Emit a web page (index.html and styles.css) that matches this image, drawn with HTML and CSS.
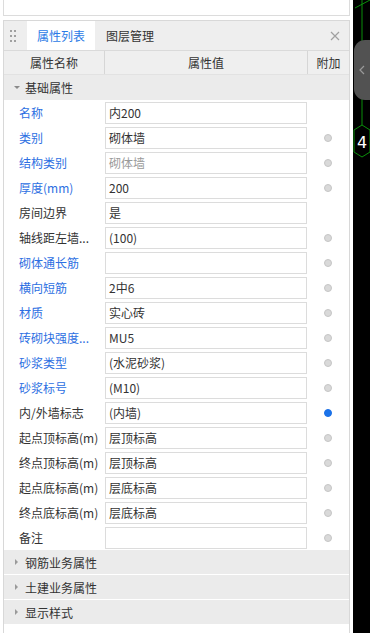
FILE: index.html
```html
<!DOCTYPE html>
<html lang="zh-CN">
<head>
    <meta charset="UTF-8">
    <meta name="viewport" content="width=device-width, initial-scale=1.0">
    <title>属性列表</title>
    <link rel="stylesheet" href="styles.css">
</head>
<body>

<div class="app">
    <div class="side">
        <div class="topbox"></div>

        <div class="panel">
            <!-- Tabs -->
            <div class="tabs">
                <span class="grip"><i></i><i></i><i></i><i></i><i></i><i></i></span>
                <span class="tab active">属性列表</span>
                <span class="tab">图层管理</span>
                <span class="close">
                    <svg width="10" height="10" viewBox="0 0 10 10"><path d="M1 1L9 9M9 1L1 9" stroke="#a0a0a0" stroke-width="1.2" fill="none"/></svg>
                </span>
            </div>

            <!-- Column header -->
            <div class="colhead">
                <div class="cell">属性名称</div>
                <div class="cell">属性值</div>
                <div class="cell">附加</div>
            </div>

            <div class="group"><span class="caret down"></span>基础属性</div>

            <div class="row"><span class="label blue">名称</span><span class="value">内200</span><span class="extra"></span></div>
            <div class="row"><span class="label blue">类别</span><span class="value">砌体墙</span><span class="extra"><i class="dot"></i></span></div>
            <div class="row"><span class="label blue">结构类别</span><span class="value muted">砌体墙</span><span class="extra"><i class="dot"></i></span></div>
            <div class="row"><span class="label blue">厚度(mm)</span><span class="value">200</span><span class="extra"><i class="dot"></i></span></div>
            <div class="row"><span class="label">房间边界</span><span class="value">是</span><span class="extra"></span></div>
            <div class="row"><span class="label">轴线距左墙...</span><span class="value">(100)</span><span class="extra"><i class="dot"></i></span></div>
            <div class="row"><span class="label blue">砌体通长筋</span><span class="value"></span><span class="extra"><i class="dot"></i></span></div>
            <div class="row"><span class="label blue">横向短筋</span><span class="value">2中6</span><span class="extra"><i class="dot"></i></span></div>
            <div class="row"><span class="label blue">材质</span><span class="value">实心砖</span><span class="extra"><i class="dot"></i></span></div>
            <div class="row"><span class="label blue">砖砌块强度...</span><span class="value">MU5</span><span class="extra"><i class="dot"></i></span></div>
            <div class="row"><span class="label blue">砂浆类型</span><span class="value">(水泥砂浆)</span><span class="extra"><i class="dot"></i></span></div>
            <div class="row"><span class="label blue">砂浆标号</span><span class="value">(M10)</span><span class="extra"><i class="dot"></i></span></div>
            <div class="row"><span class="label">内/外墙标志</span><span class="value">(内墙)</span><span class="extra"><i class="dot on"></i></span></div>
            <div class="row"><span class="label">起点顶标高(m)</span><span class="value">层顶标高</span><span class="extra"><i class="dot"></i></span></div>
            <div class="row"><span class="label">终点顶标高(m)</span><span class="value">层顶标高</span><span class="extra"><i class="dot"></i></span></div>
            <div class="row"><span class="label">起点底标高(m)</span><span class="value">层底标高</span><span class="extra"><i class="dot"></i></span></div>
            <div class="row"><span class="label">终点底标高(m)</span><span class="value">层底标高</span><span class="extra"><i class="dot"></i></span></div>
            <div class="row"><span class="label">备注</span><span class="value"></span><span class="extra"><i class="dot"></i></span></div>

            <div class="group closed"><span class="caret right"></span>钢筋业务属性</div>
            <div class="group closed"><span class="caret right"></span>土建业务属性</div>
            <div class="group closed"><span class="caret right"></span>显示样式</div>
        </div>
    </div>

    <!-- Drawing canvas edge -->
    <div class="canvas">
        <svg class="grid" width="17" height="633" viewBox="0 0 17 633">
            <path d="M9 0V125" stroke="#0b8f0b" stroke-width="1" fill="none"/>
            <path d="M2 8L17 0" stroke="#0b8f0b" stroke-width="1" fill="none"/>
            <path d="M9 125L17 130V152L9 157L1 152V130Z" stroke="#0b8f0b" stroke-width="1" fill="none"/>
            <text x="9" y="148" fill="#fff" font-family="DejaVu Sans, sans-serif" font-size="16" text-anchor="middle">4</text>
        </svg>
        <div class="fold">
            <svg width="6" height="10" viewBox="0 0 6 10"><path d="M5 1L1 5L5 9" stroke="#9a9a9a" stroke-width="1.2" fill="none"/></svg>
        </div>
    </div>
</div>

</body>
</html>
```

FILE: styles.css
```css
* {
    box-sizing: border-box;
    margin: 0;
    padding: 0;
}

body {
    background: #fff;
    font-family: "Noto Sans CJK SC", "Noto Sans", sans-serif;
    font-size: 12px;
    color: #333;
}

.app {
    display: flex;
    width: 370px;
    height: 633px;
    overflow: hidden;
}

.side {
    width: 353px;
    display: flex;
    flex-direction: column;
    padding: 0 3px;
}

.topbox {
    height: 16px;
    border: 1px solid #dcdcdc;
    border-top: none;
    background: #fff;
}

.panel {
    flex: 1;
    margin-top: 4px;
    border: 1px solid #d8d8d8;
    border-bottom: none;
    background: #fff;
}

/* Tabs */
.tabs {
    display: flex;
    align-items: stretch;
    height: 29px;
    background: #eeeeee;
}

.grip {
    display: grid;
    grid-template-columns: 2px 2px;
    grid-auto-rows: 2px;
    column-gap: 2px;
    row-gap: 3px;
    align-content: center;
    width: 6px;
    margin: 0 11px 0 6px;
}

.grip i {
    background: #a0a0a0;
}

.tab {
    display: flex;
    align-items: center;
    width: 68px;
    padding: 0 10px;
    color: #333;
    white-space: nowrap;
}

.tab + .tab {
    padding-left: 11px;
}

.tab.active {
    background: #fff;
    color: #2b7ae6;
}

.close {
    margin-left: auto;
    margin-right: 9px;
    display: flex;
    align-items: center;
}

/* Column header */
.colhead {
    display: grid;
    grid-template-columns: 100px 203px 1fr;
    height: 25px;
    background: #efefef;
    border-top: 1px solid #dadada;
    border-bottom: 1px solid #e2e2e2;
}

.colhead .cell {
    display: flex;
    align-items: center;
    justify-content: center;
    color: #333;
}

.colhead .cell + .cell {
    border-left: 1px solid #d6d6d6;
}

/* Groups */
.group {
    display: flex;
    align-items: center;
    height: 25px;
    padding-left: 9px;
    background: #ebebeb;
    color: #333;
}

.group.closed {
    border-bottom: 1px solid #fff;
}

.caret {
    display: inline-block;
    width: 0;
    height: 0;
}

.caret.down {
    border-left: 3px solid transparent;
    border-right: 3px solid transparent;
    border-top: 3px solid #8a8a8a;
    margin-left: 1px;
    margin-right: 5px;
}

.caret.right {
    border-top: 3px solid transparent;
    border-bottom: 3px solid transparent;
    border-left: 3px solid #9a9a9a;
    margin-left: 2px;
    margin-right: 7px;
}

/* Rows */
.row {
    display: grid;
    grid-template-columns: 101px 202px 1fr;
    height: 25px;
    align-items: center;
}

.label {
    padding-left: 15px;
    white-space: nowrap;
    overflow: hidden;
    color: #333;
}

.label.blue {
    color: #2d6fe2;
}

.value {
    height: 22px;
    margin-top: 1px;
    border: 1px solid #dcdcdc;
    padding-left: 3px;
    line-height: 20px;
    color: #333;
    white-space: nowrap;
}

.value.muted {
    color: #9a9a9a;
}

.extra {
    display: flex;
    justify-content: center;
}

.dot {
    display: block;
    width: 8px;
    height: 8px;
    border-radius: 50%;
    background: #d9d9d9;
    border: 1px solid #c6c6c6;
}

.dot.on {
    background: #1a73ea;
    border-color: #1a6fe6;
}

/* Canvas edge */
.canvas {
    position: relative;
    flex: 1;
    background: #000;
}

.grid {
    display: block;
}

.fold {
    position: absolute;
    left: 1px;
    top: 40px;
    width: 16px;
    height: 60px;
    background: #525252;
    border-radius: 11px 0 0 11px;
    display: flex;
    align-items: center;
    justify-content: center;
}
```
